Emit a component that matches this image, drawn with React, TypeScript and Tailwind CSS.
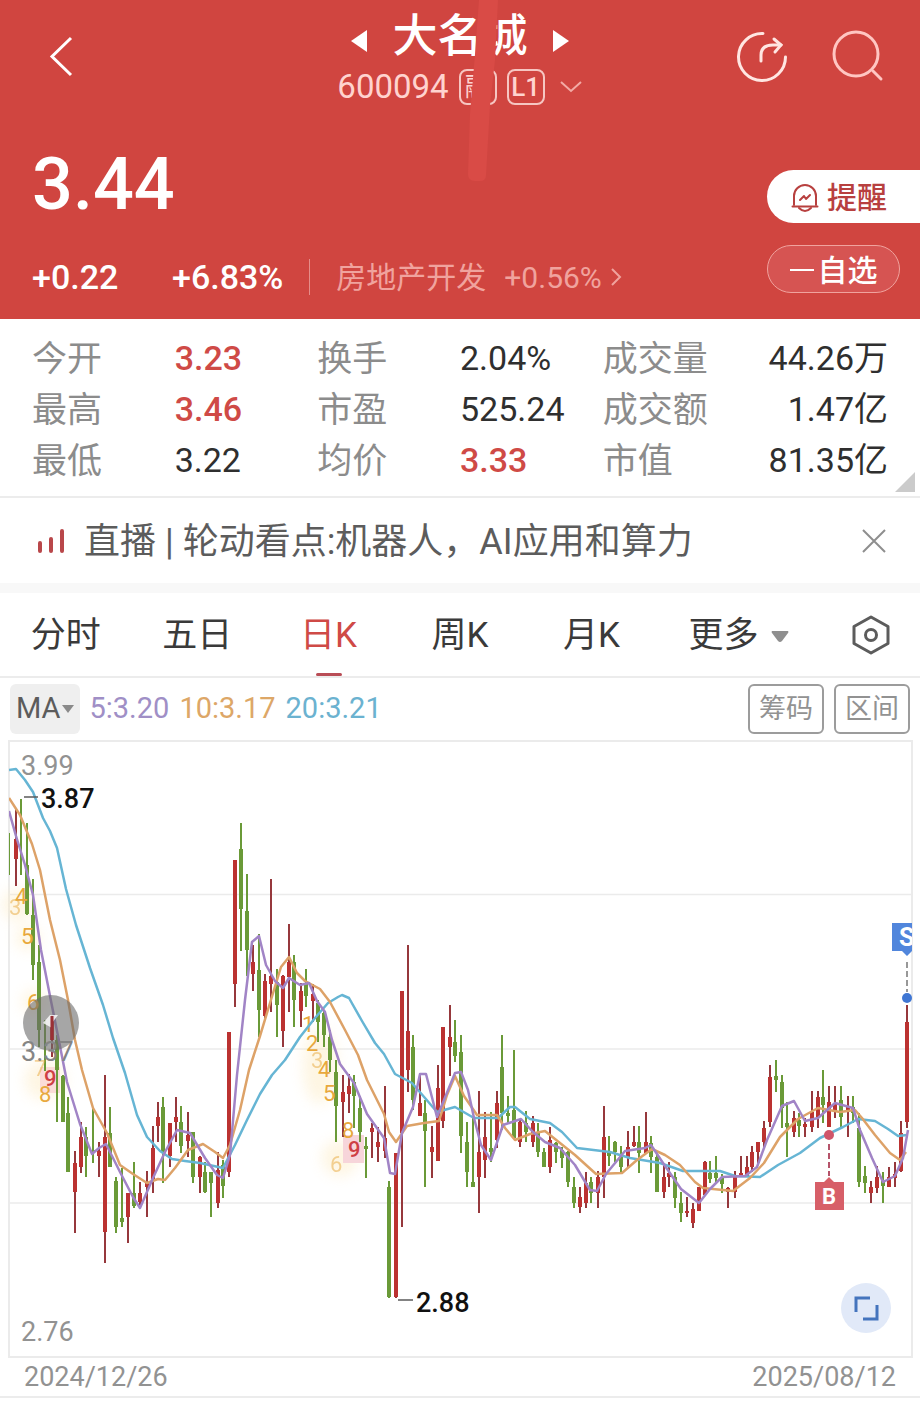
import { useState } from 'react'

interface Quote {
  label: string
  value: string
  up?: boolean
}

const QUOTES: Quote[] = [
  { label: '今开', value: '3.23', up: true },
  { label: '换手', value: '2.04%' },
  { label: '成交量', value: '44.26万' },
  { label: '最高', value: '3.46', up: true },
  { label: '市盈', value: '525.24' },
  { label: '成交额', value: '1.47亿' },
  { label: '最低', value: '3.22' },
  { label: '均价', value: '3.33', up: true },
  { label: '市值', value: '81.35亿' },
]

const TABS = ['分时', '五日', '日K', '周K', '月K']

// x, high, low, body top, body bottom, direction (1 = up, 0 = down)
type Candle = [number, number, number, number, number, 0 | 1]

const CANDLES: Candle[] = [
  [9, 833, 875, 833, 833, 0], [16, 808, 886, 839, 859, 1], [21, 799, 875, 799, 799, 0],
  [27, 823, 915, 865, 914, 0], [33, 879, 980, 915, 965, 0], [39, 945, 1047, 962, 1030, 0],
  [45, 1020, 1071, 1020, 1020, 0], [52, 1015, 1057, 1017, 1040, 1], [57, 1035, 1122, 1040, 1070, 0],
  [63, 1075, 1122, 1076, 1122, 0], [68, 1097, 1172, 1113, 1172, 0], [75, 1151, 1233, 1163, 1192, 1],
  [81, 1122, 1173, 1137, 1167, 1], [86, 1127, 1177, 1137, 1156, 0], [93, 1108, 1163, 1150, 1153, 0],
  [99, 1142, 1177, 1151, 1156, 1], [105, 1075, 1263, 1137, 1232, 1], [110, 1107, 1167, 1133, 1167, 0],
  [116, 1177, 1233, 1181, 1227, 0], [122, 1168, 1227, 1218, 1222, 0], [128, 1193, 1243, 1193, 1217, 1],
  [134, 1162, 1208, 1193, 1206, 0], [140, 1182, 1205, 1193, 1202, 1], [147, 1171, 1217, 1182, 1187, 1],
  [153, 1126, 1193, 1148, 1180, 1], [158, 1102, 1142, 1117, 1126, 1], [163, 1097, 1183, 1107, 1153, 0],
  [170, 1123, 1167, 1123, 1156, 1], [176, 1097, 1142, 1117, 1122, 1], [181, 1106, 1153, 1122, 1146, 0],
  [188, 1112, 1157, 1135, 1141, 1], [193, 1132, 1183, 1132, 1177, 0], [200, 1156, 1193, 1157, 1177, 1],
  [205, 1162, 1193, 1172, 1192, 0], [211, 1172, 1217, 1172, 1183, 0], [218, 1152, 1208, 1170, 1203, 1],
  [223, 1160, 1198, 1165, 1186, 0], [229, 1032, 1177, 1032, 1172, 1], [235, 860, 1007, 860, 984, 1],
  [241, 823, 951, 849, 909, 0], [247, 874, 976, 911, 950, 0], [253, 945, 991, 962, 974, 1],
  [259, 934, 1037, 970, 1010, 0], [265, 974, 1018, 981, 1016, 1], [271, 879, 1012, 976, 984, 1],
  [277, 969, 1037, 982, 1005, 0], [283, 975, 1047, 976, 1031, 1], [289, 924, 1012, 962, 977, 1],
  [294, 955, 1027, 962, 1000, 0], [301, 983, 1027, 991, 1011, 1], [306, 969, 1007, 984, 996, 0],
  [313, 984, 1022, 994, 1001, 1], [318, 1000, 1042, 1003, 1022, 0], [324, 1010, 1047, 1013, 1035, 0],
  [330, 1030, 1072, 1037, 1060, 0], [336, 1060, 1142, 1072, 1106, 0], [343, 1075, 1137, 1092, 1102, 1],
  [349, 1074, 1113, 1086, 1094, 1], [354, 1075, 1128, 1082, 1096, 0], [360, 1096, 1142, 1108, 1132, 0],
  [366, 1137, 1178, 1146, 1149, 0], [372, 1123, 1158, 1128, 1132, 1], [378, 1127, 1162, 1142, 1147, 1],
  [385, 1086, 1158, 1138, 1151, 1], [389, 1181, 1298, 1187, 1297, 0], [396, 1153, 1298, 1153, 1297, 1],
  [402, 991, 1227, 991, 1133, 1], [408, 945, 1092, 1031, 1070, 1], [413, 1035, 1110, 1047, 1100, 0],
  [420, 1075, 1116, 1103, 1116, 1], [425, 1100, 1187, 1113, 1131, 0], [432, 1126, 1178, 1147, 1152, 1],
  [438, 1065, 1161, 1088, 1161, 1], [443, 1027, 1128, 1027, 1121, 1], [450, 1005, 1076, 1037, 1047, 1],
  [455, 1020, 1062, 1042, 1056, 0], [461, 1035, 1153, 1052, 1136, 0], [467, 1122, 1187, 1142, 1172, 0],
  [473, 1117, 1187, 1182, 1187, 0], [479, 1091, 1213, 1152, 1177, 1], [485, 1112, 1178, 1137, 1160, 1],
  [491, 1112, 1162, 1148, 1152, 0], [497, 1091, 1148, 1103, 1140, 1], [502, 1035, 1130, 1067, 1113, 0],
  [508, 1096, 1123, 1113, 1116, 0], [514, 1050, 1138, 1110, 1138, 0], [520, 1120, 1147, 1122, 1142, 1],
  [526, 1111, 1142, 1123, 1132, 0], [533, 1116, 1147, 1123, 1142, 1], [538, 1123, 1157, 1133, 1152, 0],
  [544, 1148, 1167, 1152, 1167, 0], [550, 1127, 1173, 1140, 1167, 1], [556, 1142, 1163, 1143, 1152, 0],
  [562, 1147, 1168, 1150, 1158, 0], [568, 1151, 1187, 1152, 1182, 0], [574, 1177, 1208, 1187, 1203, 0],
  [580, 1187, 1213, 1197, 1207, 1], [586, 1172, 1208, 1183, 1203, 1], [591, 1177, 1203, 1182, 1193, 0],
  [598, 1171, 1208, 1177, 1193, 1], [604, 1106, 1198, 1137, 1177, 1], [609, 1136, 1166, 1152, 1156, 0],
  [615, 1141, 1162, 1142, 1152, 0], [621, 1146, 1172, 1157, 1167, 0], [628, 1131, 1167, 1147, 1157, 1],
  [634, 1126, 1147, 1142, 1146, 1], [639, 1126, 1173, 1142, 1153, 0], [646, 1112, 1153, 1142, 1153, 1],
  [651, 1136, 1173, 1143, 1157, 0], [657, 1153, 1192, 1157, 1192, 0], [664, 1165, 1198, 1177, 1192, 1],
  [669, 1162, 1187, 1173, 1177, 1], [675, 1172, 1208, 1177, 1198, 0], [681, 1192, 1222, 1203, 1213, 0],
  [687, 1197, 1217, 1211, 1213, 1], [693, 1203, 1228, 1209, 1223, 1], [699, 1187, 1211, 1187, 1211, 1],
  [705, 1161, 1195, 1162, 1195, 1], [710, 1161, 1183, 1173, 1179, 0], [716, 1156, 1182, 1173, 1178, 0],
  [722, 1174, 1193, 1178, 1184, 0], [728, 1187, 1208, 1188, 1192, 1], [735, 1171, 1198, 1177, 1192, 1],
  [741, 1156, 1177, 1173, 1177, 1], [747, 1156, 1177, 1167, 1177, 1], [752, 1146, 1172, 1152, 1167, 1],
  [758, 1142, 1163, 1142, 1152, 1], [764, 1121, 1147, 1128, 1142, 1], [770, 1065, 1127, 1077, 1122, 1],
  [776, 1060, 1092, 1076, 1080, 0], [782, 1075, 1128, 1082, 1108, 0], [787, 1102, 1157, 1123, 1127, 0],
  [794, 1111, 1137, 1118, 1132, 1], [799, 1113, 1137, 1120, 1126, 0], [805, 1118, 1137, 1124, 1127, 1],
  [812, 1091, 1132, 1112, 1127, 1], [818, 1091, 1128, 1097, 1117, 1], [823, 1070, 1123, 1097, 1105, 0],
  [829, 1086, 1127, 1102, 1127, 1], [835, 1086, 1118, 1103, 1112, 1], [841, 1086, 1128, 1100, 1117, 0],
  [848, 1096, 1137, 1106, 1112, 1], [853, 1096, 1123, 1107, 1113, 0], [859, 1113, 1187, 1128, 1182, 0],
  [865, 1166, 1193, 1176, 1183, 0], [871, 1181, 1203, 1187, 1193, 1], [877, 1166, 1193, 1177, 1188, 1],
  [883, 1172, 1203, 1181, 1186, 0], [889, 1167, 1187, 1177, 1187, 1], [895, 1162, 1187, 1174, 1178, 1],
  [901, 1121, 1172, 1133, 1171, 1], [907, 1005, 1128, 1022, 1122, 1],
]

const MA5 =
  '9,811 16,836 25,865 33,895 41,950 50,996 58,1036 67,1082 80,1124 92,1154 99,1148 106,1144 120,1172 133,1197 140,1208 153,1178 165,1152 177,1130 190,1133 205,1158 217,1175 223,1178 230,1155 237,1075 245,1000 252,942 259,936 266,965 275,981 283,988 289,978 300,985 309,983 317,1001 325,1012 332,1040 340,1064 354,1083 367,1114 384,1138 390,1173 395,1174 402,1133 413,1107 420,1074 426,1074 437,1117 444,1100 455,1073 461,1072 468,1090 474,1118 481,1145 491,1160 503,1125 521,1119 533,1132 545,1142 560,1148 575,1165 590,1190 597,1191 606,1174 625,1151 645,1148 651,1145 663,1163 681,1189 699,1203 710,1189 722,1177 745,1176 757,1167 767,1140 782,1106 794,1101 805,1121 818,1118 835,1103 853,1108 860,1130 872,1158 883,1182 895,1176 903,1158 908,1130'
const MA10 =
  '9,798 20,815 32,844 40,870 50,920 60,960 68,1000 75,1040 82,1070 93,1108 107,1133 120,1165 133,1174 147,1183 158,1179 165,1180 175,1168 188,1150 203,1144 215,1152 223,1158 230,1145 240,1110 249,1070 260,1036 270,1003 281,967 289,957 297,973 305,981 320,989 330,1002 345,1030 358,1055 367,1080 384,1114 389,1132 396,1142 407,1126 424,1123 439,1121 447,1095 455,1076 464,1096 477,1115 497,1115 505,1128 515,1140 530,1134 545,1131 560,1143 575,1155 596,1174 622,1173 637,1160 652,1149 665,1155 680,1165 695,1182 703,1188 733,1191 750,1178 764,1163 780,1137 798,1119 818,1108 840,1112 855,1110 862,1118 875,1135 890,1153 900,1160 906,1152'
const MA20 =
  '9,770 16,769 25,780 33,792 43,818 50,831 57,848 66,889 76,925 90,968 103,1005 113,1038 125,1073 137,1115 147,1137 160,1151 172,1159 185,1161 200,1163 223,1168 235,1145 247,1120 260,1094 272,1075 285,1060 300,1037 315,1018 328,1003 338,997 342,995 349,998 362,1021 375,1043 384,1054 395,1074 412,1083 425,1098 437,1112 455,1107 474,1118 498,1118 510,1107 515,1107 530,1119 550,1123 562,1132 577,1148 610,1152 630,1158 660,1163 683,1171 720,1171 735,1176 760,1177 778,1165 800,1153 820,1138 843,1127 858,1119 875,1121 888,1129 898,1136 907,1135'

// sequence counts next to the candles: x, baseline, digit, faded
const COUNTS: [number, number, string, boolean][] = [
  [9, 915, '3', true], [15, 904, '4', false], [21, 944, '5', false], [27, 1010, '6', false],
  [34, 1076, '7', true], [39, 1102, '8', false],
  [302, 1032, '1', false], [306, 1051, '2', false], [311, 1068, '3', true], [318, 1077, '4', false],
  [323, 1101, '5', false], [330, 1172, '6', true], [342, 1138, '8', false],
]

function Header() {
  return (
    <header className="relative bg-[#d04540] text-white">
      <nav className="grid h-28 grid-cols-[1fr_auto_1fr] items-center">
        <button aria-label="返回" className="ml-12 w-7">
          <svg viewBox="0 0 28 44" className="h-11 w-7" fill="none" stroke="#fff" strokeWidth="3">
            <path d="M23 4 4 22.500 23 41" />
          </svg>
        </button>
        <div className="pt-[10px]">
          <div className="flex items-center justify-center gap-6">
            <button aria-label="上一只" className="pt-2">
              <svg viewBox="0 0 18 24" className="h-6 w-[18px]" fill="#fff">
                <path d="M17 1v22L1 12z" />
              </svg>
            </button>
            <h1 className="text-[45px] leading-[52px] font-medium">大名城</h1>
            <button aria-label="下一只" className="pt-2">
              <svg viewBox="0 0 18 24" className="h-6 w-[18px]" fill="#fff">
                <path d="M1 1v22l16-11z" />
              </svg>
            </button>
          </div>
          <div className="flex h-12 items-center gap-[10px] text-[#ffd3cf]">
            <span className="text-[33px]">600094</span>
            <span className="flex h-9 w-[38px] items-center justify-center rounded-lg border-2 border-[#f6c6c2] text-[26px]">融</span>
            <span className="flex h-9 w-[38px] items-center justify-center rounded-lg border-2 border-[#f6c6c2] text-[26px] font-medium">L1</span>
            <svg viewBox="0 0 24 14" className="ml-1 h-[14px] w-6" fill="none" stroke="#f3aaa5" strokeWidth="2">
              <path d="m2 2 10 9L22 2" />
            </svg>
          </div>
        </div>
        <div className="flex justify-end gap-[38px] pr-9">
          <button aria-label="分享">
            <svg viewBox="0 0 56 56" className="h-14 w-14" fill="none" stroke="#ffe6e2" strokeWidth="3" strokeLinecap="round">
              <path d="M29 5.500A23.500 23.500 0 1 0 51.500 29" />
              <path d="M27 33v-6q0-10 12-10h8" />
              <path d="m40 11 7 6-6 7" />
            </svg>
          </button>
          <button aria-label="搜索">
            <svg viewBox="0 0 56 56" className="h-14 w-14" fill="none" stroke="#ffc6c2" strokeWidth="3" strokeLinecap="round">
              <circle cx="28" cy="26" r="22" />
              <path d="m45 43 8 8" />
            </svg>
          </button>
        </div>
      </nav>

      <div className="flex justify-between pb-[22px] pl-8">
        <div>
          <p className="mt-[37px] text-[72px] leading-[72px] font-medium">3.44</p>
          <p className="mt-9 flex h-10 items-center text-[34px]">
            <span className="w-[140px] font-medium">+0.22</span>
            <span className="font-medium">+6.83%</span>
            <span className="ml-[26px] h-9 w-px bg-[#e58d89]" />
            <a href="#sector" className="ml-[26px] flex items-center text-[30px] text-[#f0a39e]">
              房地产开发
              <span className="ml-[18px]">+0.56%</span>
              <svg viewBox="0 0 12 20" className="ml-2 h-5 w-3" fill="none" stroke="#f0a39e" strokeWidth="2">
                <path d="m2 2 8 8-8 8" />
              </svg>
            </a>
          </p>
        </div>
        <div className="mt-[58px] flex w-[153px] flex-col gap-[22px]">
          <button className="flex h-[53px] items-center gap-2 rounded-l-full bg-white pt-[2px] pl-6 text-[30px] font-medium text-[#b8403f]">
            <svg viewBox="0 0 28 30" className="h-[30px] w-7" fill="none" stroke="#b8403f" strokeWidth="2" strokeLinecap="round" strokeLinejoin="round">
              <path d="M3 22V13a11 11 0 0 1 22 0v9" />
              <path d="M1.500 23.500h25" />
              <path d="M8 25q6 6 12 0" />
              <path d="m9 17 4-4 2 3 4-4" />
            </svg>
            提醒
          </button>
          <button className="flex h-12 w-[133px] items-center justify-center gap-1 rounded-full border border-[#f0a39e] bg-[#d65452] pt-[2px] text-[30px] font-medium">
            <span className="h-[2px] w-6 bg-white" />
            自选
          </button>
        </div>
      </div>

      <svg viewBox="0 0 40 182" className="pointer-events-none absolute top-0 left-1/2 h-[182px] w-10" fill="#d94b46">
        <path d="M19 0h19L35 60 30 105 26 175q0 6-6 6h-5q-7 0-7-7l2-60 5-60z" />
      </svg>
    </header>
  )
}

function Quotes() {
  return (
    <section className="relative border-b-2 border-[#ececec] pt-[14px] pb-[10px]">
      <dl className="grid grid-cols-3 px-8">
        {QUOTES.map((q, i) => (
          <div key={q.label} className="flex h-[51px] items-center">
            <dt className="w-1/2 pt-1 text-[35px] text-[#8c8c8c]">{q.label}</dt>
            <dd
              className={`text-[34px] whitespace-nowrap ${q.up ? 'font-medium text-[#cf4a46]' : 'text-[#2f2f2f]'} ${
                i % 3 === 2 ? 'flex-1 text-right' : ''
              }`}
            >
              {q.value}
            </dd>
          </div>
        ))}
      </dl>
      <svg viewBox="0 0 20 20" className="absolute right-[5px] bottom-1 h-5 w-5" fill="#cbcbcb">
        <path d="M20 0v20H0z" />
      </svg>
    </section>
  )
}

function NewsBar() {
  return (
    <section className="flex h-[85px] items-center pr-8 pl-9 text-[#5c5c5c]">
      <svg viewBox="0 0 30 26" className="h-[26px] w-[30px]" fill="none" stroke="#b9474a" strokeWidth="4" strokeLinecap="round">
        <path d="M4 15v8M15 11v12M26 3v20" />
      </svg>
      <a href="#live" className="ml-[18px] flex-1 pt-[2px] text-[36px] whitespace-nowrap">直播 | 轮动看点:机器人，AI应用和算力</a>
      <button aria-label="关闭">
        <svg viewBox="0 0 28 28" className="h-7 w-7" fill="none" stroke="#8e8e8e" strokeWidth="2">
          <path d="m3 3 22 22M25 3 3 25" />
        </svg>
      </button>
    </section>
  )
}

function KChart() {
  return (
    <svg viewBox="0 740 920 618" className="block h-auto w-full" role="img" aria-label="日K">
      <defs>
        <clipPath id="plot">
          <rect x="9" y="741" width="903" height="616" />
        </clipPath>
        <filter id="glow" x="-50%" y="-50%" width="200%" height="200%">
          <feGaussianBlur stdDeviation="7" />
        </filter>
      </defs>
      <g stroke="#ebebeb" strokeWidth="2" fill="none">
        <path d="M9 741H912V1357H9z" />
        <path d="M9 894.500H912M9 1049H912M9 1203H912" strokeWidth="1.500" />
      </g>
      <g fill="#fdeac0" opacity="0.45" filter="url(#glow)">
        <circle cx="18" cy="905" r="16" />
        <circle cx="28" cy="938" r="12" />
        <circle cx="34" cy="1002" r="12" />
        <circle cx="45" cy="1080" r="20" />
        <ellipse cx="320" cy="1066" rx="17" ry="38" />
        <circle cx="340" cy="1158" r="18" />
      </g>
      <rect x="40" y="1067" width="20" height="26" fill="#fbdcd8" />
      <rect x="343" y="1135" width="21" height="28" fill="#f7d5da" />
      <g fontSize="27" fill="#929292">
        <text x="21" y="775">3.99</text>
        <text x="21" y="1341">2.76</text>
      </g>
      <g clipPath="url(#plot)">
        {CANDLES.map(([x, high, low, top, bottom, up]) => (
          <g key={x} fill={up ? '#bb3231' : '#6a9a38'}>
            <rect x={x - 1} y={high} width="2" height={low - high} fill={up ? '#96383c' : '#6a9a38'} />
            <rect x={x - 2} y={top} width="4" height={bottom - top} />
          </g>
        ))}
        <g fontSize="22" fill="#e8a83c">
          {COUNTS.map(([x, y, digit, faded]) => (
            <text key={`${x}-${y}`} x={x} y={y} opacity={faded ? 0.5 : 1}>
              {digit}
            </text>
          ))}
        </g>
        <g fontSize="22" fontWeight="500" fill="#cf3f44">
          <text x="44" y="1086">9</text>
          <text x="348" y="1157">9</text>
        </g>
        <g fill="none" strokeWidth="2.500" strokeLinejoin="round">
          <polyline points={MA20} stroke="#66b5d4" />
          <polyline points={MA10} stroke="#dda268" />
          <polyline points={MA5} stroke="#a184c6" />
        </g>
      </g>
      <path d="M24 797h14M398 1300h15" stroke="#5b5b5b" strokeWidth="1.500" />
      <g fontSize="27" fontWeight="500" fill="#111">
        <text x="41" y="808">3.87</text>
        <text x="416" y="1312">2.88</text>
      </g>

      <circle cx="51" cy="1023" r="28" fill="#6b6b6b" opacity="0.6" />
      <path d="m43 1023 7-8h8l-6 8v5z" fill="#fff" opacity="0.8" />
      <path d="M52 1016v24" stroke="#9a2f35" strokeWidth="3" />
      <text x="21" y="1061" fontSize="27" fill="#858585">3.37</text>

      <g clipPath="url(#plot)">
        <path d="M892 923h30v28h-10l-5 5-5-5h-10z" fill="#5186dc" />
        <text x="899" y="946" fontSize="25" fontWeight="700" fill="#fff">S</text>
      </g>
      <path d="M907 962v30" stroke="#777" strokeWidth="1.500" strokeDasharray="6 3" />
      <circle cx="907" cy="998" r="5" fill="#3f76d3" />

      <circle cx="829" cy="1135" r="5" fill="#d0566a" />
      <path d="M829 1144v32" stroke="#b5536a" strokeWidth="2" strokeDasharray="6 3" />
      <path d="M815 1182h9l5-5 5 5h10v28h-29z" fill="#d75f68" />
      <text x="829" y="1204" fontSize="22" fontWeight="700" fill="#fff" textAnchor="middle">B</text>

      <circle cx="866" cy="1308" r="25" fill="#e1e9f8" />
      <path d="M856 1312v-14h14M877 1305v14h-14" fill="none" stroke="#4474bd" strokeWidth="3" />
    </svg>
  )
}

export default function App() {
  const [tab, setTab] = useState('日K')

  return (
    <div className="bg-white font-[Roboto,'Noto_Sans_CJK_SC',sans-serif]">
      <Header />
      <Quotes />
      <NewsBar />
      <div className="h-[10px] bg-[#f8f8f8]" />

      {/* Period tabs */}
      <div className="grid h-[85px] grid-cols-7 border-b-2 border-[#ececec] text-[35px] text-[#3a3a3a]">
        {TABS.map((t) => (
          <button
            key={t}
            onClick={() => setTab(t)}
            className={`relative pt-1 ${t === tab ? 'text-[#cf4a46]' : ''}`}
          >
            {t}
            {t === tab && (
              <span className="absolute bottom-0 left-1/2 h-[3px] w-[26px] -translate-x-1/2 rounded-full bg-[#b94d56]" />
            )}
          </button>
        ))}
        <button className="flex items-center justify-end gap-3 pt-1">
          更多
          <svg viewBox="0 0 18 12" className="h-3 w-[18px]" fill="#8f8f8f">
            <path d="M1 0h16q1 1 0 2l-6 8q-2 2-4 0L1 2q-1-1 0-2z" />
          </svg>
        </button>
        <button aria-label="设置" className="flex items-center justify-end pr-[30px]">
          <svg viewBox="0 0 38 40" className="h-10 w-[38px]" fill="none" stroke="#5c5c5c" strokeWidth="3" strokeLinejoin="round">
            <path d="M19 2 36 11.500v17L19 38 2 28.500v-17z" />
            <circle cx="19" cy="20" r="5.500" />
          </svg>
        </button>
      </div>

      {/* Moving averages */}
      <div className="flex h-[62px] items-center px-[10px] text-[29px]">
        <button className="flex h-[50px] items-center gap-px rounded-md bg-[#efefef] px-[6px] text-[#5c5c5c]">
          MA
          <svg viewBox="0 0 12 8" className="h-2 w-3" fill="#8a8a8a">
            <path d="M0 0h12L6 8z" />
          </svg>
        </button>
        <span className="ml-[10px] text-[#a08fc6]">5:3.20</span>
        <span className="ml-[10px] text-[#dda767]">10:3.17</span>
        <span className="ml-[10px] text-[#6bb2d0]">20:3.21</span>
        <button className="ml-auto h-[50px] w-[76px] rounded-md border-2 border-[#9c9c9c] text-[27px] text-[#929292]">筹码</button>
        <button className="ml-[10px] h-[50px] w-[76px] rounded-md border-2 border-[#9c9c9c] text-[27px] text-[#929292]">区间</button>
      </div>

      <KChart />

      <div className="flex h-10 items-center justify-between border-b-2 border-[#ececec] px-6 text-[27px] text-[#929292]">
        <time>2024/12/26</time>
        <time>2025/08/12</time>
      </div>
    </div>
  )
}
